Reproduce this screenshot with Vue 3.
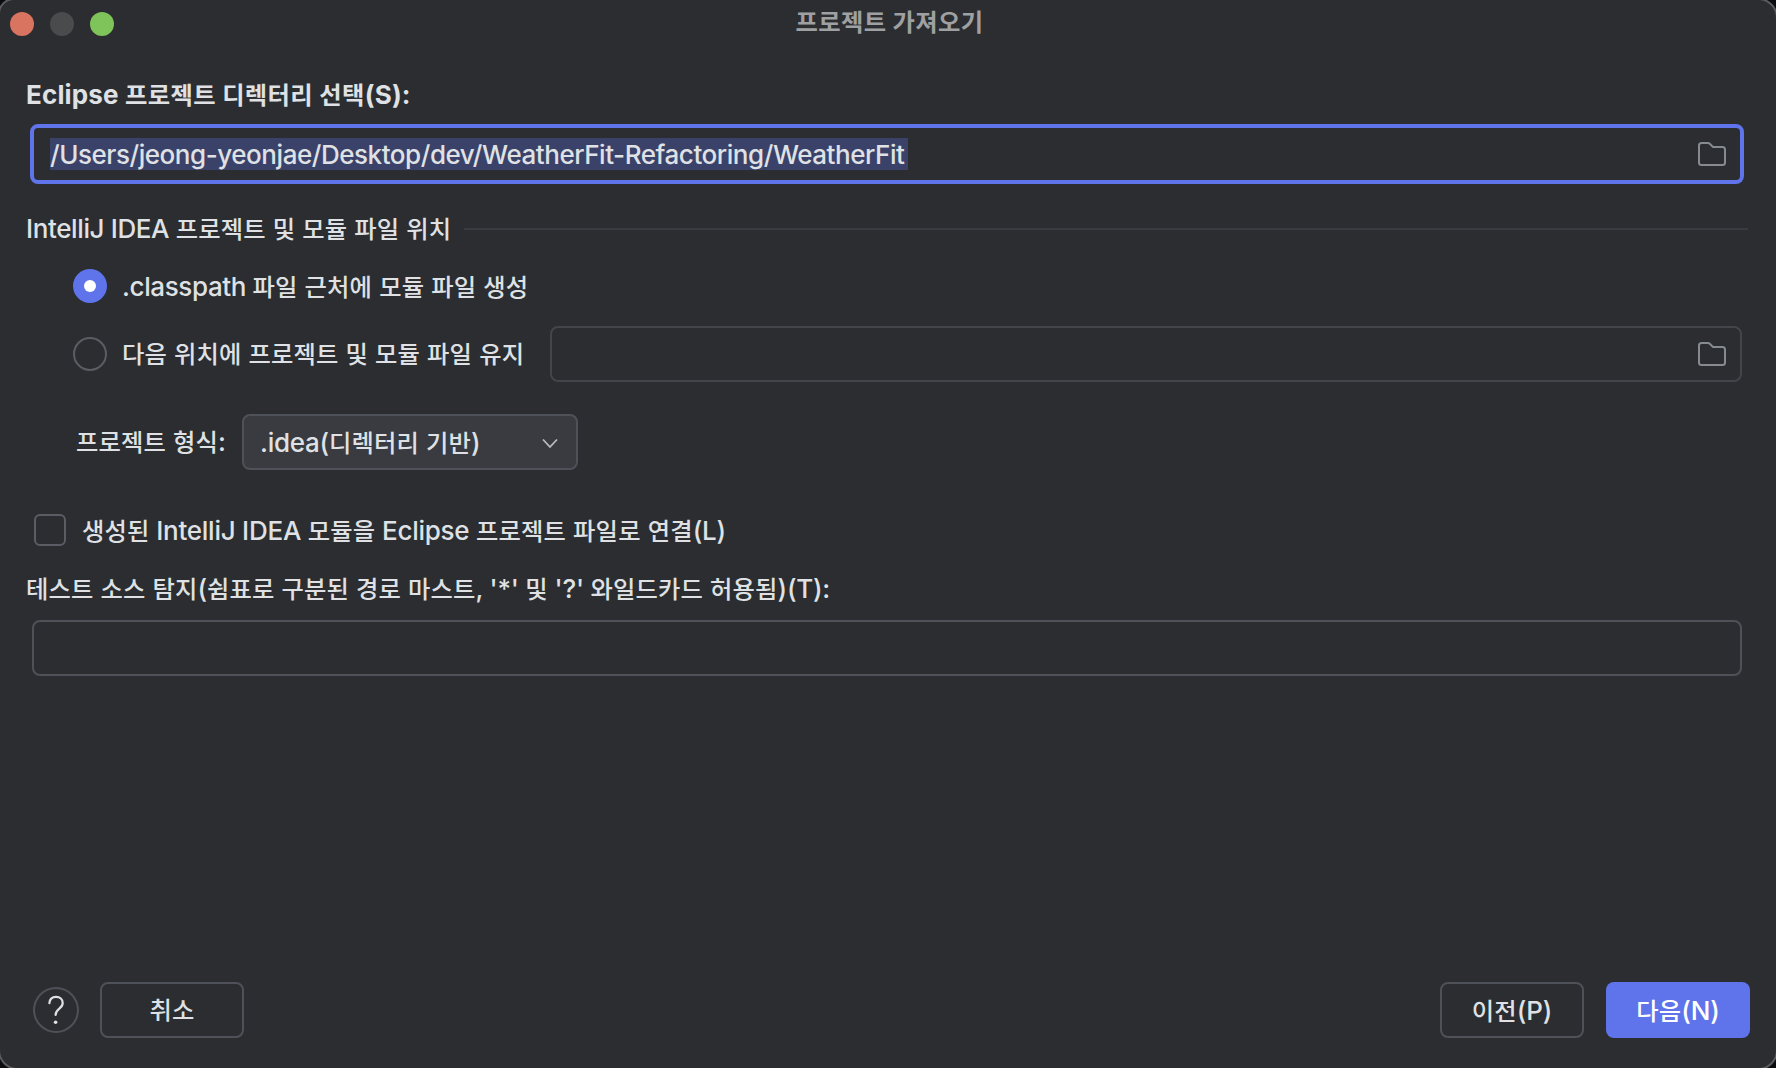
<script setup>
const FOLDER =
  'M1 5.5V20.5Q1 23 3.5 23H24.5Q27 23 27 20.5V7.5Q27 5 24.5 5H15L11.8 1.8Q11 1 9.8 1H3.5Q1 1 1 3.5Z'

const title = '프로젝트 가져오기'
const path = '/Users/jeong-yeonjae/Desktop/dev/WeatherFit-Refactoring/WeatherFit'

// Hangul runs are set slightly smaller than the Latin text around them,
// and the word gaps between them are a little wider.
const runs = (text) =>
  (text.match(/[\uac00-\ud7a3]+|[^\uac00-\ud7a3]+/g) || []).map((t) => ({
    t,
    cls: /[\uac00-\ud7a3]/.test(t) ? 'ko' : t === ' ' ? 'gap' : 'latin'
  }))
</script>

<template>
  <div class="desktop">
    <main class="dialog">
      <header class="titlebar">
        <div class="lights">
          <i class="light close"></i><i class="light minimize"></i><i class="light zoom"></i>
        </div>
        <h1 class="title"><span class="ko">{{ title }}</span></h1>
      </header>

      <section class="content">
        <label class="text heading"><span v-for="(r, i) in runs('Eclipse 프로젝트 디렉터리 선택(S):')" :key="i" :class="r.cls">{{ r.t }}</span></label>

        <div class="field focused">
          <span class="text selection">{{ path }}</span>
          <svg class="folder" width="28" height="24" viewBox="0 0 28 24"><path :d="FOLDER" /></svg>
        </div>

        <div class="group-title">
          <span class="text"><span v-for="(r, i) in runs('IntelliJ IDEA 프로젝트 및 모듈 파일 위치')" :key="i" :class="r.cls">{{ r.t }}</span></span>
          <i class="rule"></i>
        </div>

        <div class="option first">
          <i class="radio checked"></i>
          <span class="text low"><span v-for="(r, i) in runs('.classpath 파일 근처에 모듈 파일 생성')" :key="i" :class="r.cls">{{ r.t }}</span></span>
        </div>

        <div class="option second">
          <i class="radio"></i>
          <span class="text keep"><span v-for="(r, i) in runs('다음 위치에 프로젝트 및 모듈 파일 유지')" :key="i" :class="r.cls">{{ r.t }}</span></span>
          <div class="field disabled">
            <svg class="folder" width="28" height="24" viewBox="0 0 28 24"><path :d="FOLDER" /></svg>
          </div>
        </div>

        <div class="format">
          <span class="text format-label"><span v-for="(r, i) in runs('프로젝트 형식:')" :key="i" :class="r.cls">{{ r.t }}</span></span>
          <div class="combo">
            <span class="text low"><span v-for="(r, i) in runs('.idea(디렉터리 기반)')" :key="i" :class="r.cls">{{ r.t }}</span></span>
            <svg width="18" height="11" viewBox="0 0 18 11"><path d="M2 1.5L9 9L16 1.5" /></svg>
          </div>
        </div>

        <div class="link-row">
          <i class="checkbox"></i>
          <span class="text low"><span v-for="(r, i) in runs('생성된 IntelliJ IDEA 모듈을 Eclipse 프로젝트 파일로 연결(L)')" :key="i" :class="r.cls">{{ r.t }}</span></span>
        </div>

        <label class="text mask-label"><span v-for="(r, i) in runs(`테스트 소스 탐지(쉼표로 구분된 경로 마스트, '*' 및 '?' 와일드카드 허용됨)(T):`)" :key="i" :class="r.cls">{{ r.t }}</span></label>
        <div class="field mask"></div>
      </section>

      <footer class="footer">
        <button class="help" aria-label="help">
          <svg width="46" height="46" viewBox="0 0 46 46">
            <path d="M16.4 16.2C16.4 12.3 19 9.9 23 9.9C27 9.9 29.7 12.3 29.7 15.9C29.7 18.5 28.4 20 26.3 21.7C23.6 23.8 22.6 25.2 22.6 28" />
            <circle cx="22.6" cy="35.3" r="1.8" />
          </svg>
        </button>
        <button class="button cancel"><span class="text"><span class="ko">취소</span></span></button>
        <span class="spacer"></span>
        <button class="button"><span class="text low"><span class="ko">이전</span>(P)</span></button>
        <button class="button primary"><span class="text low"><span class="ko">다음</span>(N)</span></button>
      </footer>
    </main>
  </div>
</template>

<style>
body {
  margin: 0;
  background: #0c0c0e;
}
</style>

<style scoped>
* {
  box-sizing: border-box;
}
.desktop {
  display: flex;
  align-items: center;
  justify-content: center;
  width: 1776px;
  height: 1068px;
  background: #0c0c0e;
  overflow: hidden;
}
/* The window frame runs just past the viewport, so it shows only at the corners. */
.dialog {
  display: flex;
  flex: none;
  flex-direction: column;
  width: 1780px;
  height: 1072px;
  background: #2b2d30;
  border: 2px solid #5b5c5f;
  border-radius: 16px 20px 20px 20px;
  color: #dfe1e5;
  font-family: Inter, "Noto Sans CJK KR", sans-serif;
}
.text {
  display: block;
  font-size: 26px;
  font-weight: 500;
  line-height: 32px;
  height: 32px;
  letter-spacing: -0.38px;
  white-space: pre;
}
.low {
  padding-top: 1px;
  height: 33px;
}
.gap {
  letter-spacing: 0.05px;
}
.ko {
  font-family: "Noto Sans CJK KR", sans-serif;
  font-size: 24.3px;
  font-weight: 500;
  line-height: 1;
  letter-spacing: 0.16px;
}
.titlebar {
  display: grid;
  grid-template-columns: 200px 1fr 200px;
  height: 48px;
  align-items: center;
}
.lights {
  display: flex;
  gap: 16px;
  padding-left: 10px;
}
.light {
  width: 24px;
  height: 24px;
  border-radius: 50%;
}
.close {
  background: #d8745f;
}
.minimize {
  background: #4a4b4d;
}
.zoom {
  background: #7fc35b;
}
.title {
  margin: 0;
  height: 32px;
  line-height: 28px;
  padding-left: 3px;
  text-align: center;
  font-size: 26px;
  color: #9fa0a2;
}
.title .ko {
  font-weight: 700;
  letter-spacing: 0.4px;
}
.content {
  display: flex;
  flex-direction: column;
  padding: 0 28px 0 26px;
}
.heading {
  margin-top: 31px;
  font-weight: 700;
  letter-spacing: 0.15px;
}
.heading .ko {
  font-weight: 700;
  letter-spacing: 0.38px;
}
.field {
  display: flex;
  align-items: center;
  justify-content: flex-end;
  border: 2px solid #4e5157;
  border-radius: 8px;
  height: 56px;
}
.focused {
  margin: 13px 4px 0;
  height: 60px;
  border: 4px solid #5f74ea;
  padding: 0 14px 0 16px;
  justify-content: space-between;
}
.selection {
  width: 858px;
  line-height: 34px;
  letter-spacing: -0.45px;
  background: #3b426a;
}
.folder {
  fill: none;
  stroke: #868a91;
  stroke-width: 2;
}
.group-title {
  display: flex;
  align-items: center;
  height: 32px;
  margin-top: 29px;
}
.group-title .text {
  width: 438px;
}
.rule {
  flex: 1;
  height: 2px;
  background: #393b40;
}
.option {
  display: flex;
  align-items: center;
  padding-left: 47px;
  gap: 15px;
}
.first {
  height: 34px;
  margin-top: 24px;
}
.second {
  height: 56px;
  margin-top: 23px;
}
.keep {
  width: 413px;
}
.radio {
  width: 34px;
  height: 34px;
  border: 2px solid #5a5d63;
  border-radius: 50%;
}
.checked {
  display: grid;
  place-items: center;
  border: 0;
  background: #5f74ea;
}
.checked::after {
  content: "";
  width: 12px;
  height: 12px;
  border-radius: 50%;
  background: #fff;
}
.disabled {
  flex: 1;
  margin-right: 6px;
  padding-right: 14px;
  border-color: #43454a;
}
.format {
  display: flex;
  align-items: center;
  height: 56px;
  margin-top: 32px;
  padding-left: 50px;
}
.format-label {
  width: 166px;
}
.combo {
  display: flex;
  align-items: center;
  justify-content: space-between;
  width: 336px;
  height: 56px;
  padding: 0 17px 0 16px;
  border: 2px solid #4e5157;
  border-radius: 8px;
  background: #393b40;
}
.combo .text {
  letter-spacing: -0.25px;
}
.combo svg {
  margin-top: 3px;
  fill: none;
  stroke: #b9bbc0;
  stroke-width: 1.8;
}
.link-row {
  display: flex;
  align-items: center;
  gap: 16px;
  height: 32px;
  margin-top: 44px;
  padding-left: 8px;
}
.link-row .text {
  letter-spacing: -0.25px;
}
.checkbox {
  width: 32px;
  height: 32px;
  border: 2px solid #5a5d63;
  border-radius: 6px;
}
.mask-label {
  margin-top: 27px;
  letter-spacing: -0.25px;
}
.mask {
  margin: 15px 6px 0;
}
.footer {
  display: flex;
  align-items: center;
  height: 56px;
  margin-top: auto;
  margin-bottom: 30px;
  padding: 0 26px 0 33px;
}
.help {
  width: 46px;
  height: 46px;
  padding: 0;
  border: 0;
  border-radius: 50%;
  box-shadow: inset 0 0 0 2px #4e5157;
  background: none;
}
.help svg {
  display: block;
}
.help path {
  fill: none;
  stroke: #dfe1e5;
  stroke-width: 2.2;
  stroke-linecap: round;
}
.help circle {
  fill: #dfe1e5;
}
.button {
  display: flex;
  align-items: center;
  justify-content: center;
  width: 144px;
  height: 56px;
  padding: 0;
  border: 2px solid #4e5157;
  border-radius: 8px;
  background: none;
  color: inherit;
  font-family: inherit;
}
.button .text {
  letter-spacing: -0.1px;
}
.cancel {
  margin-left: 21px;
}
.spacer {
  flex: 1;
}
.primary {
  margin-left: 22px;
  border: 0;
  background: #5f74ea;
  color: #fff;
}
</style>
